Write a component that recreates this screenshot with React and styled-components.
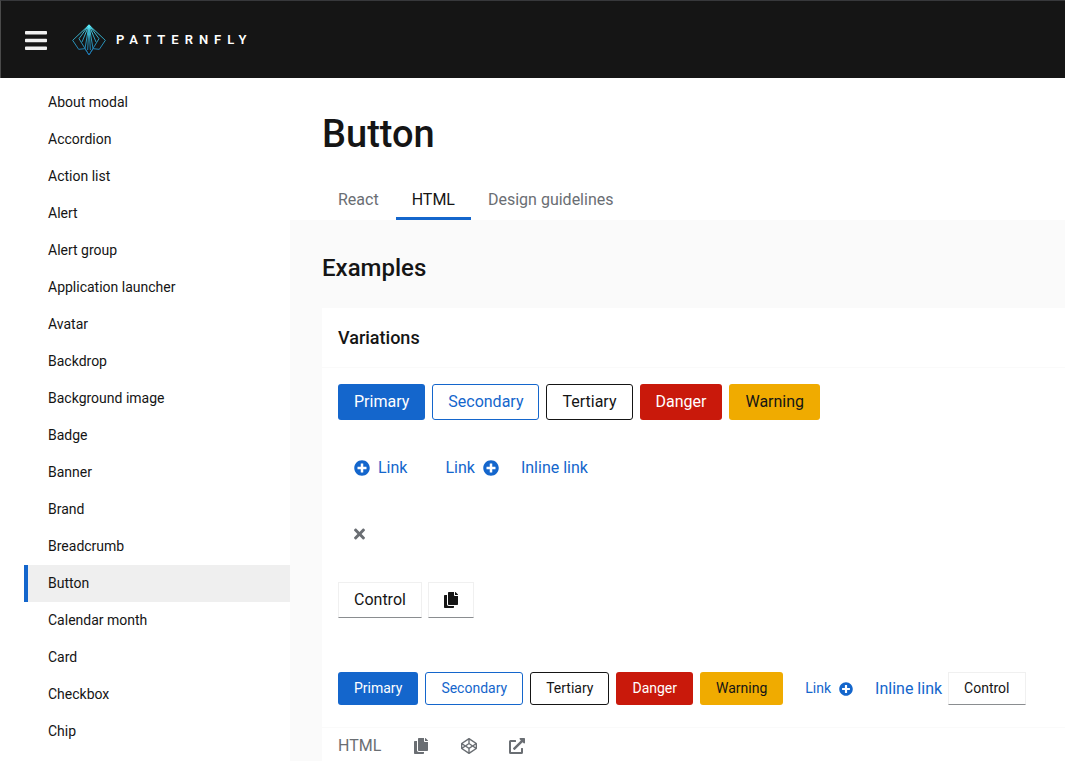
import React from "react";
import styled, { createGlobalStyle, css } from "styled-components";
import {
  FaBars,
  FaCodepen,
  FaCopy,
  FaExternalLinkAlt,
  FaPlusCircle,
  FaTimes,
} from "react-icons/fa";

const color = {
  text: "#151515",
  muted: "#6a6e73",
  blue: "#1466cc",
  red: "#c9190b",
  gold: "#f0ab00",
  line: "#f0f0f0",
  page: "#fafafa",
};

const GlobalStyle = createGlobalStyle`
  *, *::before, *::after { box-sizing: border-box; }
  body {
    margin: 0;
    overflow: hidden;
    background: #fff;
    color: ${color.text};
    font-family: Roboto, "Liberation Sans", sans-serif;
    font-size: 16px;
    line-height: 24px;
  }
  button { font-family: inherit; cursor: pointer; }
  svg { display: block; }
`;

const Page = styled.div`
  display: grid;
  grid-template: auto minmax(0, 1fr) / 290px minmax(0, 1fr);
  height: 100vh;
`;

const Masthead = styled.header`
  grid-column: 1 / -1;
  display: flex;
  align-items: center;
  gap: 25px;
  height: 78px;
  padding: 1px 24px 0;
  background: ${color.text};
  border-top: 1px solid #37383b;
  border-left: 1px solid #4a4a4a;
`;

const MenuButton = styled.button`
  padding: 0;
  border: 0;
  background: none;
  color: #f0f0f0;
  svg { width: 22px; height: 25px; }
`;

const Brand = styled.a`
  display: flex;
  align-items: center;
  gap: 10px;
  color: #fff;
  font-size: 13px;
  font-weight: 600;
  letter-spacing: 6px;
  text-decoration: none;
`;

const BrandMark = styled.svg`
  width: 34px;
  height: 32px;
`;

const Sidebar = styled.nav`
  padding: 6px 0 0 24px;
  overflow: hidden;
`;

const NavList = styled.ul`
  margin: 0;
  padding: 0;
  list-style: none;
`;

const NavLink = styled.a`
  display: block;
  padding: 8px 20px;
  border-left: 4px solid ${(p) => (p.$current ? color.blue : "transparent")};
  background: ${(p) => (p.$current ? "#efefef" : "transparent")};
  color: ${color.text};
  font-size: 14px;
  line-height: 21px;
  text-decoration: none;
`;

const Main = styled.main`
  display: flex;
  flex-direction: column;
  overflow: hidden;
`;

const TitleBar = styled.div`
  padding: 32px 32px 0;
`;

const Title = styled.h1`
  margin: 0 0 22px;
  font-size: 38px;
  font-weight: 500;
  line-height: 48px;
`;

const Tabs = styled.div`
  display: flex;
  gap: 1px;
`;

const Tab = styled.a`
  padding: 8px 16px 5px;
  border-bottom: 3px solid ${(p) => (p.$current ? color.blue : "transparent")};
  color: ${(p) => (p.$current ? color.text : color.muted)};
  text-decoration: none;
`;

const Section = styled.section`
  flex: 1;
  padding: 32px 0 0 32px;
  background: ${color.page};
`;

const SectionTitle = styled.h2`
  margin: 0 0 24px;
  font-size: 24px;
  font-weight: 500;
  line-height: 32px;
`;

const Card = styled.article`
  background: #fff;
`;

const CardTitle = styled.h3`
  margin: 0;
  padding: 16px;
  border-bottom: 1px solid ${color.page};
  font-size: 18px;
  font-weight: 500;
  line-height: 27px;
`;

const Preview = styled.div`
  display: flex;
  flex-direction: column;
  gap: 30px;
  padding: 16px 16px 22px;
`;

const Row = styled.div`
  display: flex;
  align-items: center;
  gap: 6px;
  margin-top: ${(p) => (p.$apart ? "24px" : "0")};
`;

const ButtonGroup = styled.div`
  display: flex;
  gap: 7px;
`;

const variants = {
  primary: css`background: ${color.blue}; color: #fff;`,
  secondary: css`border-color: ${color.blue}; color: ${color.blue};`,
  tertiary: css`border-color: ${color.text};`,
  danger: css`background: ${color.red}; color: #fff;`,
  warning: css`background: ${color.gold};`,
  link: css`color: ${color.blue};`,
  plain: css`
    color: ${color.muted};
    svg { width: 11px; }
  `,
  control: css`
    border-color: ${color.line} ${color.line} #8a8d90;
    border-radius: 0;
    svg { width: 14px; }
  `,
};

const Button = styled.button`
  display: inline-flex;
  align-items: center;
  gap: 8px;
  min-height: ${(p) => (p.$small ? "33px" : "36px")};
  padding: 5px 15px;
  border: 1px solid transparent;
  border-radius: 3px;
  background: none;
  color: ${color.text};
  font-size: ${(p) => (p.$small ? "14px" : "16px")};
  line-height: ${(p) => (p.$small ? "21px" : "24px")};
  ${(p) => variants[p.$variant]}
`;

const InlineLink = styled.button`
  padding: 0;
  border: 0;
  background: none;
  color: ${color.blue};
  font-size: 16px;
  line-height: 24px;
`;

const CodeBar = styled.div`
  display: flex;
  border-top: 1px solid ${color.page};
`;

const CodeButton = styled.button`
  display: flex;
  align-items: center;
  padding: 6px 16px;
  border: 0;
  background: none;
  color: ${color.muted};
  font-size: 16px;
  line-height: 24px;
`;

const components = [
  "About modal", "Accordion", "Action list", "Alert", "Alert group",
  "Application launcher", "Avatar", "Backdrop", "Background image", "Badge",
  "Banner", "Brand", "Breadcrumb", "Button", "Calendar month", "Card",
  "Checkbox", "Chip",
];

const tabs = ["React", "HTML", "Design guidelines"];

const solid = ["Primary", "Secondary", "Tertiary", "Danger", "Warning"];

function SolidButtons({ small }) {
  return (
    <ButtonGroup>
      {solid.map((name) => (
        <Button key={name} type="button" $variant={name.toLowerCase()} $small={small}>
          {name}
        </Button>
      ))}
    </ButtonGroup>
  );
}

function Logo() {
  return (
    <BrandMark viewBox="0 0 102 96" fill="none" stroke="url(#wing)" strokeWidth="3" aria-hidden="true">
      <defs>
        <linearGradient id="wing" gradientUnits="userSpaceOnUse" x1="51" y1="0" x2="51" y2="96">
          <stop offset="0" stopColor="#58e6f5" />
          <stop offset="0.45" stopColor="#2f9fbd" />
          <stop offset="1" stopColor="#1a6ca8" />
        </linearGradient>
      </defs>
      <path d="M51 3 2 49 20 76 39 74M51 3 100 49 82 76 63 74" />
      <path d="M51 3 21 44 51 93 81 44Z" />
      <path d="M51 3 30 54M51 3 72 54M51 3 39 74 51 93 63 74Z" />
      <path d="M51 3 47 78M51 3 55 78" />
      <path d="M51 1 44 8 51 13 58 8Z" fill="#58e6f5" stroke="none" />
    </BrandMark>
  );
}

export default function App() {
  return (
    <>
      <GlobalStyle />
      <Page>
        <Masthead>
          <MenuButton type="button" aria-label="Global navigation">
            <FaBars preserveAspectRatio="none" />
          </MenuButton>
          <Brand href="#home">
            <Logo />
            PATTERNFLY
          </Brand>
        </Masthead>
        <Sidebar aria-label="Components">
          <NavList>
            {components.map((name) => (
              <li key={name}>
                <NavLink href="#component" $current={name === "Button"}>{name}</NavLink>
              </li>
            ))}
          </NavList>
        </Sidebar>
        <Main>
          <TitleBar>
            <Title>Button</Title>
            <Tabs>
              {tabs.map((name) => (
                <Tab key={name} href="#tab" $current={name === "HTML"}>{name}</Tab>
              ))}
            </Tabs>
          </TitleBar>
          <Section>
            <SectionTitle>Examples</SectionTitle>
            <Card>
              <CardTitle>Variations</CardTitle>
              <Preview>
                <Row><SolidButtons /></Row>
                <Row>
                  <Button type="button" $variant="link"><FaPlusCircle />Link</Button>
                  <Button type="button" $variant="link">Link<FaPlusCircle /></Button>
                  <InlineLink type="button">Inline link</InlineLink>
                </Row>
                <Row>
                  <Button type="button" $variant="plain" aria-label="Close"><FaTimes /></Button>
                </Row>
                <Row>
                  <Button type="button" $variant="control">Control</Button>
                  <Button type="button" $variant="control" aria-label="Copy"><FaCopy /></Button>
                </Row>
                <Row $apart>
                  <SolidButtons small />
                  <Button type="button" $variant="link" $small>Link<FaPlusCircle /></Button>
                  <InlineLink type="button">Inline link</InlineLink>
                  <Button type="button" $variant="control" $small>Control</Button>
                </Row>
              </Preview>
              <CodeBar>
                <CodeButton type="button">HTML</CodeButton>
                <CodeButton type="button" aria-label="Copy code"><FaCopy /></CodeButton>
                <CodeButton type="button" aria-label="Open in CodePen"><FaCodepen /></CodeButton>
                <CodeButton type="button" aria-label="Open in new window"><FaExternalLinkAlt /></CodeButton>
              </CodeBar>
            </Card>
          </Section>
        </Main>
      </Page>
    </>
  );
}
